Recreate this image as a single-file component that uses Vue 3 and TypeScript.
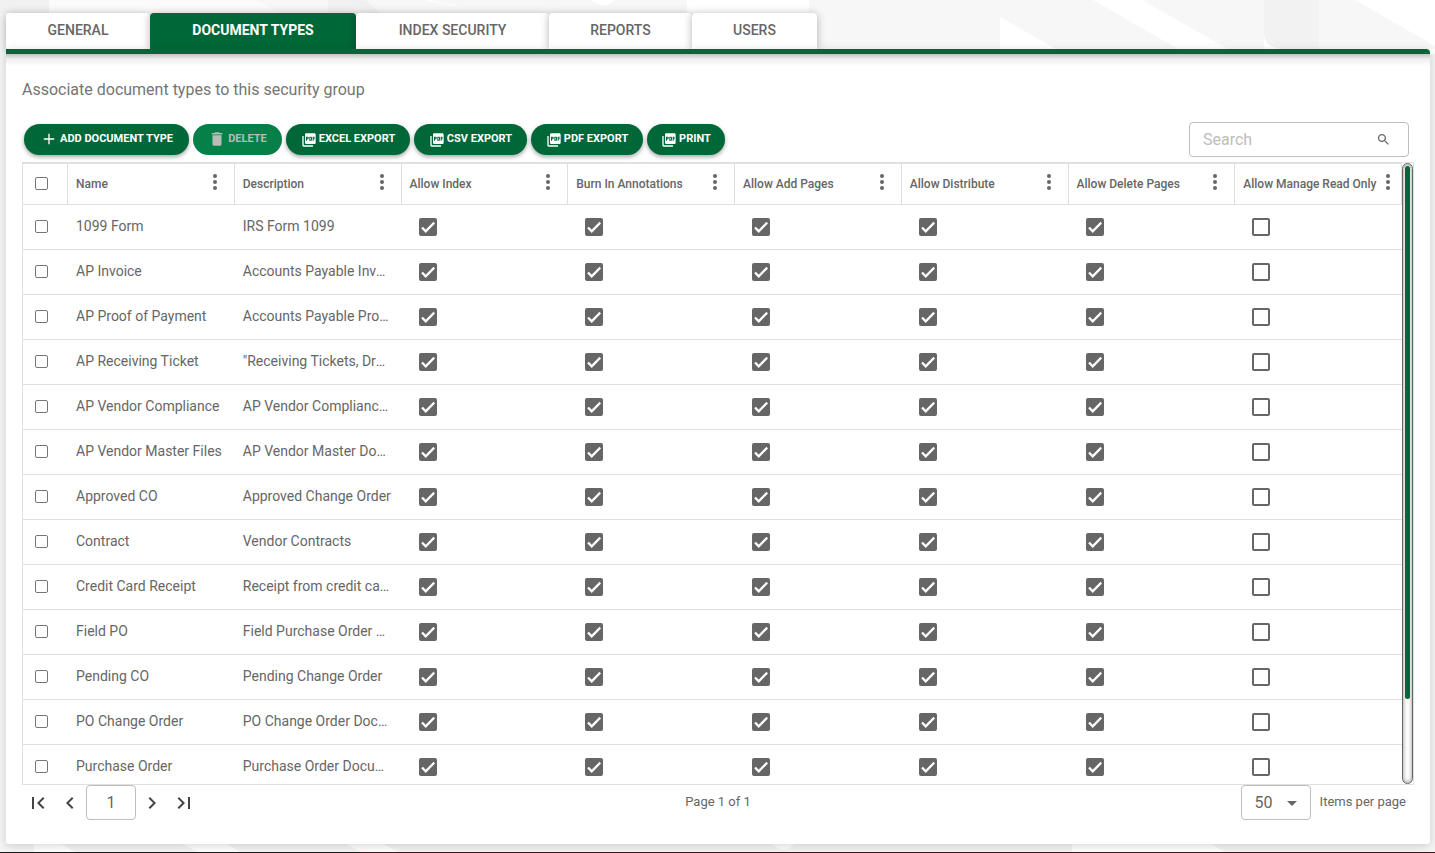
<script setup lang="ts">
import { computed, onMounted, ref } from 'vue'

interface Tab {
  label: string
  size: string
}

interface Action {
  label: string
  icon: 'plus' | 'trash' | 'file'
  size: string
  disabled?: boolean
}

interface DocType {
  name: string
  description: string
  selected: boolean
  rights: boolean[]
}

const icons: Record<Action['icon'], string> = {
  plus: 'M19 12.900h-6.100V19h-1.800v-6.100H5v-1.800h6.100V5h1.800v6.100H19z',
  trash: 'M6 19c0 1.1.9 2 2 2h8c1.1 0 2-.9 2-2V7H6v12zM19 4h-3.5l-1-1h-5l-1 1H5v2h14V4z',
  file: 'M20 2H8c-1.1 0-2 .9-2 2v12c0 1.1.9 2 2 2h12c1.1 0 2-.9 2-2V4c0-1.1-.9-2-2-2zm-8.500 7.500c0 .83-.67 1.500-1.500 1.500H9v2H7.500V7H10c.83 0 1.500.67 1.500 1.500v1zm5 2c0 .83-.67 1.500-1.500 1.500h-2.500V7H15c.83 0 1.500.67 1.500 1.500v3zm4-3H19v1h1.500V11H19v2h-1.500V7h3v1.500zM9 9.500h1v-1H9v1zM4 6H2v14c0 1.100.9 2 2 2h14v-2H4V6zm10 5.500h1v-3h-1v3z',
}

const tabs: Tab[] = [
  { label: 'GENERAL', size: 'w144' },
  { label: 'DOCUMENT TYPES', size: 'w206' },
  { label: 'INDEX SECURITY', size: 'w193' },
  { label: 'REPORTS', size: 'w143' },
  { label: 'USERS', size: 'w125' },
]
const activeTab = ref('DOCUMENT TYPES')

const actions: Action[] = [
  { label: 'ADD DOCUMENT TYPE', icon: 'plus', size: 'w165' },
  { label: 'DELETE', icon: 'trash', size: 'w89', disabled: true },
  { label: 'EXCEL EXPORT', icon: 'file', size: 'w124' },
  { label: 'CSV EXPORT', icon: 'file', size: 'w113' },
  { label: 'PDF EXPORT', icon: 'file', size: 'w112' },
  { label: 'PRINT', icon: 'file', size: 'w78' },
]

const rightNames = [
  'Allow Index',
  'Burn In Annotations',
  'Allow Add Pages',
  'Allow Distribute',
  'Allow Delete Pages',
  'Allow Manage Read Only',
]
const columns = ['Name', 'Description', ...rightNames]

const source: [string, string][] = [
  ['1099 Form', 'IRS Form 1099'],
  ['AP Invoice', 'Accounts Payable Invoice'],
  ['AP Proof of Payment', 'Accounts Payable Proof of Payment'],
  ['AP Receiving Ticket', '"Receiving Tickets, Drop Tickets"'],
  ['AP Vendor Compliance', 'AP Vendor Compliance Documents'],
  ['AP Vendor Master Files', 'AP Vendor Master Documents'],
  ['Approved CO', 'Approved Change Order'],
  ['Contract', 'Vendor Contracts'],
  ['Credit Card Receipt', 'Receipt from credit card purchase'],
  ['Field PO', 'Field Purchase Order Documents'],
  ['Pending CO', 'Pending Change Order'],
  ['PO Change Order', 'PO Change Order Documents'],
  ['Purchase Order', 'Purchase Order Documents'],
  ['Subcontract', 'Subcontract Documents'],
  ['Timesheet', 'Employee Timesheet'],
]

const rows = ref<DocType[]>(
  source.map(([name, description]) => ({
    name,
    description,
    selected: false,
    rights: [true, true, true, true, true, false],
  })),
)

const search = ref('')
const page = ref('1')
const perPage = ref('50')

const visibleRows = computed(() =>
  rows.value.filter((r) => r.name.toLowerCase().includes(search.value.toLowerCase())),
)

const allSelected = computed({
  get: () => rows.value.every((r) => r.selected),
  set: (value: boolean) => rows.value.forEach((r) => (r.selected = value)),
})

const scroller = ref<HTMLElement | null>(null)
const thumbSize = ref(100)
const thumbTop = ref(0)

function syncThumb() {
  const el = scroller.value
  if (!el) return
  thumbSize.value = (el.clientHeight / el.scrollHeight) * 100
  thumbTop.value = (el.scrollTop / el.scrollHeight) * el.clientHeight
}

onMounted(() => {
  syncThumb()
  window.addEventListener('resize', syncThumb)
})
</script>

<template>
  <div class="page">
    <svg class="backdrop" viewBox="0 0 1435 853" preserveAspectRatio="none" aria-hidden="true">
      <path fill="#f1f1f1" d="M0 0H49V13H0zM328 0H365Q376 5 381 13H328z" />
      <path fill="#fbfbfb" d="M49 0H255L280 13H49z" />
      <path fill="#f7f7f7" d="M255 0H328V13H280zM365 0H425L490 13H381zM430 0H687V13H490zM809 0H1093L1178 49H1056L1000 17V49H809zM1142 0H1264V49H1228zM1319 0H1355L1435 46V49H1319zM1000 0V49L960 49V0z" />
      <path fill="#fff" d="M591 0H615Q603 11 591 0z" />
      <path fill="#f2f2f2" d="M1264 0H1319V49H1280Q1264 46 1264 34z" />
      <path fill="#f4f4f4" d="M0 13H6V853H0zM1430 54H1435V853H1430zM6 843H34V853H6zM60 843H181L200 853H76zM225 843H344L364 853H242zM381 843H771Q785 856 795 843H1072V853H400zM1210 843H1430V853H1226z" />
      <path fill="#17191a" d="M0 852H360V853H0z" />
      <path fill="#3b1820" d="M360 852H1435V853H360z" />
    </svg>

    <nav class="tabs" aria-label="Security group sections">
      <button
        v-for="tab in tabs"
        :key="tab.label"
        type="button"
        class="tab"
        :class="[tab.size, { active: activeTab === tab.label }]"
        @click="activeTab = tab.label"
      >
        {{ tab.label }}
      </button>
    </nav>

    <main class="panel">
      <p class="intro">Associate document types to this security group</p>

      <div class="toolbar">
        <div class="actions">
          <button
            v-for="action in actions"
            :key="action.label"
            type="button"
            class="action"
            :class="[action.size, action.icon]"
            :disabled="action.disabled"
          >
            <svg class="action-icon" viewBox="0 0 24 24" aria-hidden="true">
              <path :d="icons[action.icon]" />
            </svg>
            <span>{{ action.label }}</span>
          </button>
        </div>
        <label class="search">
          <input v-model="search" type="text" placeholder="Search" aria-label="Search" />
          <svg viewBox="0 0 24 24" aria-hidden="true">
            <path d="M15.5 14h-.79l-.28-.27C15.410 12.590 16 11.110 16 9.500 16 5.910 13.090 3 9.500 3S3 5.910 3 9.500 5.910 16 9.500 16c1.610 0 3.090-.59 4.230-1.570l.27.28v.79l5 4.990L20.490 19l-4.990-5zm-6 0C7.010 14 5 11.990 5 9.500S7.010 5 9.500 5 14 7.010 14 9.500 11.990 14 9.500 14z" />
          </svg>
        </label>
      </div>

      <div class="grid">
        <div ref="scroller" class="scroller" @scroll="syncThumb">
          <table>
            <colgroup>
              <col class="select-col" />
              <col v-for="column in columns" :key="column" />
            </colgroup>
            <thead>
              <tr>
                <th class="select-cell">
                  <input v-model="allSelected" class="pick" type="checkbox" aria-label="Select all" />
                </th>
                <th v-for="column in columns" :key="column">
                  <div class="head">
                    <span>{{ column }}</span>
                    <button type="button" class="kebab" :aria-label="column + ' column menu'">
                      <svg viewBox="0 0 24 24" aria-hidden="true">
                        <circle cx="12" cy="6" r="2" />
                        <circle cx="12" cy="12" r="2" />
                        <circle cx="12" cy="18" r="2" />
                      </svg>
                    </button>
                  </div>
                </th>
              </tr>
            </thead>
            <tbody>
              <tr v-for="row in visibleRows" :key="row.name">
                <td class="select-cell">
                  <input v-model="row.selected" class="pick" type="checkbox" :aria-label="'Select ' + row.name" />
                </td>
                <td class="text">{{ row.name }}</td>
                <td class="text">{{ row.description }}</td>
                <td v-for="(right, i) in rightNames" :key="right">
                  <span class="tick">
                    <input v-model="row.rights[i]" type="checkbox" :aria-label="right + ' for ' + row.name" />
                    <svg v-if="row.rights[i]" viewBox="0 0 24 24" aria-hidden="true">
                      <path d="M1.730 12.910 8.100 19.280 22.790 4.590" />
                    </svg>
                  </span>
                </td>
              </tr>
            </tbody>
          </table>
        </div>
        <div class="track" aria-hidden="true">
          <div class="thumb" :style="{ height: thumbSize + '%', marginTop: thumbTop + 'px' }"></div>
        </div>
      </div>

      <footer class="pager">
        <div class="pages">
          <button type="button" aria-label="First page">
            <svg viewBox="0 0 24 24"><path d="M18.410 16.590 13.820 12l4.590-4.590L17 6l-6 6 6 6zM6 6h2v12H6z" /></svg>
          </button>
          <button type="button" class="prev" aria-label="Previous page">
            <svg viewBox="0 0 24 24"><path d="M15.410 7.410 14 6l-6 6 6 6 1.410-1.410L10.830 12z" /></svg>
          </button>
          <input v-model="page" type="text" aria-label="Page number" />
          <button type="button" class="next" aria-label="Next page">
            <svg viewBox="0 0 24 24"><path d="M10 6 8.590 7.410 13.170 12l-4.580 4.590L10 18l6-6z" /></svg>
          </button>
          <button type="button" aria-label="Last page">
            <svg viewBox="0 0 24 24"><path d="M5.590 7.410 10.180 12l-4.590 4.590L7 18l6-6-6-6zM16 6h2v12h-2z" /></svg>
          </button>
        </div>
        <span class="status">Page 1 of 1</span>
        <div class="size">
          <span class="select">
            <select id="per-page" v-model="perPage">
              <option>25</option>
              <option>50</option>
              <option>100</option>
            </select>
            <svg viewBox="0 0 10 5" aria-hidden="true"><path d="M0 0h10L5 5z" /></svg>
          </span>
          <label for="per-page">Items per page</label>
        </div>
      </footer>
    </main>
  </div>
</template>

<style>
body {
  background: #fff;
}
</style>

<style scoped>
.page {
  position: relative;
  display: flex;
  flex-direction: column;
  box-sizing: border-box;
  height: 100vh;
  min-height: 480px;
  padding: 13px 5px 9px 6px;
  font-family: Roboto, "Liberation Sans", sans-serif;
  color: #666;
}

.page * {
  box-sizing: border-box;
}

button,
input,
select {
  margin: 0;
  font-family: inherit;
  color: inherit;
}

svg {
  display: block;
  fill: currentColor;
}

.backdrop {
  position: absolute;
  inset: 0;
  z-index: -1;
  width: 100%;
  height: 100%;
}

.tabs {
  display: flex;
  height: 36px;
}

.tab {
  padding: 0 0 2px;
  border: 0;
  border-radius: 4px 4px 0 0;
  background: #fff;
  box-shadow: 0 1px 8px rgba(0, 0, 0, 0.3);
  font-size: 14px;
  font-weight: 500;
  white-space: nowrap;
}

.tab.active {
  background: #006838;
  color: #fff;
  font-weight: 700;
}

.w144 { width: 144px; }
.w206 { width: 206px; }
.w193 { width: 193px; }
.w143 { width: 143px; }
.w125 { width: 125px; }

.panel {
  position: relative;
  display: flex;
  flex: 1;
  flex-direction: column;
  min-height: 0;
  padding: 24px 16px;
  border-top: 5px solid #006838;
  border-radius: 0 4px 4px 4px;
  background: #fff linear-gradient(#c4c0c1, #efefef 5px, #fff 12px) no-repeat;
  box-shadow: 0 2px 10px rgba(0, 0, 0, 0.16);
}

.intro {
  margin: 0 0 20px;
  color: #757575;
  font-size: 16px;
  line-height: 24px;
}

.toolbar {
  display: flex;
  align-items: center;
  justify-content: space-between;
  margin: 0 5px 5px 2px;
}

.actions {
  display: flex;
  gap: 4px;
}

.action {
  display: flex;
  align-items: center;
  justify-content: center;
  gap: 2px;
  height: 31px;
  padding: 0;
  border: 0;
  border-radius: 16px;
  background: #006838;
  box-shadow: 0 2px 4px rgba(0, 0, 0, 0.35);
  color: #fff;
  font-size: 11px;
  font-weight: 700;
  line-height: 12px;
  white-space: nowrap;
}

.action span {
  padding-bottom: 2px;
}

.action:disabled {
  background: #058048;
  box-shadow: none;
  color: #b6bdb8;
}

.action-icon {
  width: 16px;
  height: 16px;
}

.plus .action-icon,
.trash .action-icon {
  width: 18px;
  height: 18px;
  margin-bottom: 2px;
}

.w165 { width: 165px; }
.w89 { width: 89px; }
.w124 { width: 124px; }
.w113 { width: 113px; }
.w112 { width: 112px; }
.w78 { width: 78px; }

.search {
  display: flex;
  align-items: center;
  width: 220px;
  height: 35px;
  padding: 0 17px 0 13px;
  border: 1px solid #bdbdbd;
  border-radius: 4px;
}

.search input {
  flex: 1;
  min-width: 0;
  padding: 0;
  border: 0;
  outline: 0;
  background: none;
  font-size: 16px;
}

.search input::placeholder {
  color: #bdbdbd;
}

.search svg {
  width: 15px;
  height: 15px;
}

.grid {
  display: flex;
  flex: 1;
  min-height: 0;
  border: 1px solid #e0e0e0;
}

.scroller {
  flex: 1;
  min-width: 0;
  overflow-x: hidden;
  overflow-y: auto;
  scrollbar-width: none;
}

table {
  width: 100%;
  table-layout: fixed;
  border-collapse: separate;
  border-spacing: 0;
}

.select-col {
  width: 45px;
}

th {
  position: sticky;
  top: 0;
  z-index: 1;
  height: 42px;
  padding: 0 7px 0 8px;
  border: solid #e0e0e0;
  border-width: 1px 1px 1px 0;
  background: #fff;
  font-size: 12px;
  font-weight: 500;
  text-align: left;
}

td {
  height: 45px;
  padding: 0 7px 0 8px;
  border-bottom: 1px solid #e0e0e0;
  font-size: 14px;
}

th.select-cell,
td.select-cell {
  padding: 0 0 2px 12px;
}

td.text {
  padding: 0 9px 2px 8px;
  overflow: hidden;
  text-overflow: ellipsis;
  white-space: nowrap;
}

.head {
  display: flex;
  align-items: center;
  justify-content: space-between;
  white-space: nowrap;
}

.kebab {
  flex: none;
  width: 24px;
  height: 24px;
  margin-bottom: 4px;
  padding: 0;
  border: 0;
  background: none;
}

.pick {
  display: block;
  width: 13px;
  height: 13px;
  appearance: none;
  border: 1px solid #767676;
  border-radius: 2px;
  background: #fff;
}

.pick:checked {
  background: #006838;
}

.tick {
  position: relative;
  display: block;
  width: 18px;
  height: 18px;
  margin-left: 9px;
}

.tick input {
  display: block;
  width: 18px;
  height: 18px;
  appearance: none;
  border: 2px solid #666;
  border-radius: 2px;
  background: #fff;
}

.tick input:checked {
  background: #666;
}

.tick svg {
  position: absolute;
  inset: 2px;
  width: 14px;
  height: 14px;
  fill: none;
  stroke: #fff;
  stroke-width: 4;
  pointer-events: none;
}

.track {
  flex: none;
  width: 11px;
  padding: 2px;
  overflow: hidden;
  border: 1px solid #666;
  border-radius: 6px;
  background: #fff;
  box-shadow: inset 0 0 4px #888;
}

.thumb {
  width: 5px;
  border-radius: 3px;
  background: #006838;
}

.pager {
  display: grid;
  grid-template-columns: 1fr auto 1fr;
  align-items: center;
  padding: 0 8px 0 4px;
  font-size: 13px;
}

.pages {
  display: flex;
  align-items: center;
  gap: 8px;
}

.pages button {
  width: 24px;
  height: 24px;
  padding: 0;
  border: 0;
  background: none;
  color: #444;
}

.pages .prev {
  margin-right: -4px;
}

.pages .next {
  margin-left: -4px;
}

.pages input {
  width: 50px;
  height: 35px;
  border: 1px solid #bdbdbd;
  border-radius: 4px;
  background: #fff;
  font-size: 16px;
  text-align: center;
}

.status {
  padding: 0 0 2px 4px;
}

.size {
  display: flex;
  align-items: center;
  justify-content: flex-end;
  gap: 9px;
}

.size label {
  padding-bottom: 2px;
}

.select {
  position: relative;
}

.select select {
  display: block;
  width: 70px;
  height: 35px;
  padding: 0 0 0 13px;
  appearance: none;
  border: 1px solid #bdbdbd;
  border-radius: 4px;
  background: #fff;
  font-size: 16px;
}

.select svg {
  position: absolute;
  top: 16px;
  right: 14px;
  width: 10px;
  height: 5px;
  pointer-events: none;
}
</style>
